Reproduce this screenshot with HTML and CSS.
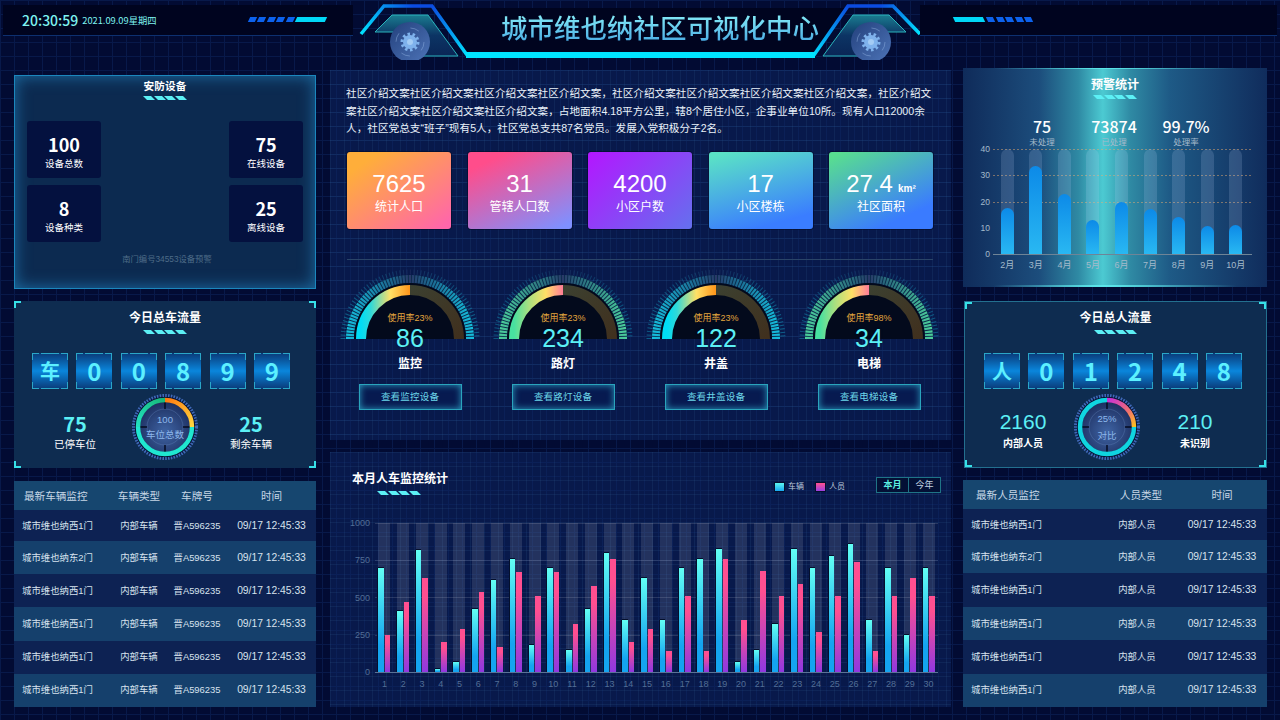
FILE: index.html
```html
<!DOCTYPE html>
<html lang="zh-CN">
<head>
  <meta charset="UTF-8" />
  <title>城市维也纳社区可视化中心</title>
  <link rel="stylesheet" href="styles.css">
</head>
<body>
  <svg class="svg-defs" xmlns="http://www.w3.org/2000/svg">
    <defs>
      <linearGradient id="line-left" gradientUnits="userSpaceOnUse" x1="8" y1="34" x2="60" y2="6">
        <stop offset="0" stop-color="#00e5ff"/><stop offset="1" stop-color="#0b4be0"/>
      </linearGradient>
      <linearGradient id="line-down" gradientUnits="userSpaceOnUse" x1="79" y1="6" x2="114" y2="57">
        <stop offset="0" stop-color="#0b4be0"/><stop offset="1" stop-color="#00e5ff"/>
      </linearGradient>
      <linearGradient id="line-up" gradientUnits="userSpaceOnUse" x1="458" y1="57" x2="495" y2="6">
        <stop offset="0" stop-color="#00e5ff"/><stop offset="1" stop-color="#0b4be0"/>
      </linearGradient>
      <linearGradient id="line-right" gradientUnits="userSpaceOnUse" x1="527" y1="6" x2="567" y2="34">
        <stop offset="0" stop-color="#0b4be0"/><stop offset="1" stop-color="#00e5ff"/>
      </linearGradient>
      <linearGradient id="trap" x1="0" y1="0" x2="0" y2="1">
        <stop offset="0" stop-color="#1a7c90"/><stop offset=".5" stop-color="#0c3464"/><stop offset="1" stop-color="#0a2656"/>
      </linearGradient>
      <linearGradient id="gear-disc" x1="0" y1="0" x2="1" y2="1">
        <stop offset="0" stop-color="#23407c"/><stop offset="1" stop-color="#4d74b8"/>
      </linearGradient>
      <linearGradient id="arc-cyan" gradientUnits="userSpaceOnUse" x1="21" y1="0" x2="70" y2="0">
        <stop offset="0" stop-color="#00dcf5"/><stop offset=".2" stop-color="#30d8d8"/><stop offset=".6" stop-color="#ffe066"/><stop offset="1" stop-color="#ff951a"/>
      </linearGradient>
      <linearGradient id="arc-green" gradientUnits="userSpaceOnUse" x1="21" y1="0" x2="70" y2="0">
        <stop offset="0" stop-color="#48e0a0"/><stop offset=".3" stop-color="#a8e080"/><stop offset=".65" stop-color="#ffe066"/><stop offset="1" stop-color="#ff7d98"/>
      </linearGradient>
      <linearGradient id="arc-brown" x1="0" y1="0" x2="1" y2="1">
        <stop offset="0" stop-color="#3c4030"/><stop offset="1" stop-color="#40301e"/>
      </linearGradient>
      <linearGradient id="band-cyan" gradientUnits="userSpaceOnUse" x1="6" y1="0" x2="134" y2="0">
        <stop offset="0" stop-color="#14c0e0"/><stop offset=".38" stop-color="#1d5f88"/><stop offset=".5" stop-color="#2a3868"/><stop offset=".62" stop-color="#1d5f88"/><stop offset="1" stop-color="#14c0e0"/>
      </linearGradient>
      <linearGradient id="band-green" gradientUnits="userSpaceOnUse" x1="6" y1="0" x2="134" y2="0">
        <stop offset="0" stop-color="#4cd09c"/><stop offset=".38" stop-color="#28687c"/><stop offset=".5" stop-color="#2a3868"/><stop offset=".62" stop-color="#28687c"/><stop offset="1" stop-color="#4cd09c"/>
      </linearGradient>
      <radialGradient id="ring-disc" cx=".5" cy=".6" r=".6">
        <stop offset="0" stop-color="#3f64a4"/><stop offset="1" stop-color="#1d2f60"/>
      </radialGradient>
      <linearGradient id="ring-orange" x1="0" y1="0" x2="1" y2="1">
        <stop offset="0" stop-color="#ff7a10"/><stop offset="1" stop-color="#ffd640"/>
      </linearGradient>
      <linearGradient id="ring-green" x1="0" y1="1" x2="1" y2="0">
        <stop offset="0" stop-color="#22e0c0"/><stop offset="1" stop-color="#18b878"/>
      </linearGradient>
      <linearGradient id="ring-magenta" x1="0" y1="0" x2="1" y2="1">
        <stop offset="0" stop-color="#c830d8"/><stop offset=".6" stop-color="#f07070"/><stop offset="1" stop-color="#ffc020"/>
      </linearGradient>

      <symbol id="gauge-cyan" viewBox="0 0 140 70">
        <path d="M3 70A67 67 0 0 1 137 70" fill="none" stroke="url(#band-cyan)" stroke-width="5" stroke-dasharray="1 2.5" opacity=".4"/>
        <path d="M10 70A60 60 0 0 1 130 70" fill="none" stroke="#0b2c4c" stroke-width="8"/>
        <path d="M10 70A60 60 0 0 1 130 70" fill="none" stroke="url(#band-cyan)" stroke-width="8" stroke-dasharray="2.1 1"/>
        <circle cx="70" cy="70" r="56" fill="#030a1c"/>
        <path d="M21 70A49 49 0 0 1 70 21" fill="none" stroke="url(#arc-cyan)" stroke-width="10"/>
        <path d="M70 21A49 49 0 0 1 119 70" fill="none" stroke="url(#arc-brown)" stroke-width="10"/>
      </symbol>
      <symbol id="gauge-green" viewBox="0 0 140 70">
        <path d="M3 70A67 67 0 0 1 137 70" fill="none" stroke="url(#band-cyan)" stroke-width="5" stroke-dasharray="1 2.5" opacity=".35"/>
        <path d="M10 70A60 60 0 0 1 130 70" fill="none" stroke="#0b2c4c" stroke-width="8"/>
        <path d="M10 70A60 60 0 0 1 130 70" fill="none" stroke="url(#band-green)" stroke-width="8" stroke-dasharray="2.1 1"/>
        <circle cx="70" cy="70" r="56" fill="#030a1c"/>
        <path d="M21 70A49 49 0 0 1 70 21" fill="none" stroke="url(#arc-green)" stroke-width="10"/>
        <path d="M70 21A49 49 0 0 1 119 70" fill="none" stroke="url(#arc-brown)" stroke-width="10"/>
      </symbol>
      <symbol id="dial" viewBox="0 0 66 66">
        <circle cx="33" cy="33" r="31.5" fill="#0a1a44" stroke="#3f68b8" stroke-width="3" stroke-dasharray="1.6 1.2"/>
        <circle cx="33" cy="33" r="30" fill="#07122e"/>
        <circle cx="33" cy="33" r="25" fill="url(#ring-disc)"/>
        <circle cx="33" cy="33" r="18" fill="none" stroke="#6f92c8" stroke-width=".6" opacity=".5"/>
        <path d="M33 8v7M33 51v7M8 33h7M51 33h7" stroke="#050b20" stroke-width="1.5"/>
      </symbol>
      <symbol id="gear" viewBox="0 0 40 40">
        <circle cx="20" cy="20" r="20" fill="url(#gear-disc)"/>
        <circle cx="20" cy="20" r="14" fill="none" stroke="#9fc0ee" stroke-width=".8" stroke-dasharray="9 13" opacity=".5"/>
        <circle cx="20" cy="20" r="8" fill="none" stroke="#7fb2ec" stroke-width="3" stroke-dasharray="2.5 2.5"/>
        <circle cx="20" cy="20" r="7" fill="#7fb2ec"/>
        <circle cx="20" cy="20" r="3" fill="#a4ccf4"/>
      </symbol>
    </defs>
  </svg>

  <header class="header">
    <div class="bar bar-left">
      <span class="clock">20:30:59</span>
      <span class="date">2021.09.09星期四</span>
      <div class="ticks"><i></i><i></i><i></i><i></i><i></i><b></b></div>
    </div>
    <div class="title-block">
      <svg class="title-art" viewBox="0 0 575 60" xmlns="http://www.w3.org/2000/svg">
        <polygon points="79,8 114,54 458,54 495,8" fill="#00041f"/>
        <polygon points="22,32 39,15 75,15 105,56 60,56 40,32" fill="url(#trap)" stroke="#2ab4bc" stroke-width="1"/>
        <polygon points="553,32 536,15 500,15 470,56 515,56 535,32" fill="url(#trap)" stroke="#2ab4bc" stroke-width="1"/>
        <path d="M8 34L31 6H60" fill="none" stroke="url(#line-left)" stroke-width="3.5"/>
        <path d="M60 6H79L114 55" fill="none" stroke="url(#line-down)" stroke-width="3.5"/>
        <path d="M461 55L495 6H527" fill="none" stroke="url(#line-up)" stroke-width="3.5"/>
        <path d="M527 6H540L567 34" fill="none" stroke="url(#line-right)" stroke-width="3.5"/>
        <rect x="113" y="52" width="349" height="6" fill="#00e5ff"/>
        <use href="#gear" x="37" y="22" width="40" height="40"/>
        <use href="#gear" x="498" y="22" width="40" height="40"/>
      </svg>
      <h1 class="title">城市维也纳社区可视化中心</h1>
    </div>
    <div class="bar bar-right">
      <div class="ticks ticks-flip"><b></b><i></i><i></i><i></i><i></i><i></i></div>
    </div>
  </header>

  <main class="page">
    <section class="col col-left">
      <div class="panel panel-device">
        <h2 class="panel-title">安防设备</h2>
        <div class="stripes"><i></i><i></i><i></i><i></i></div>
        <div class="device-grid">
          <div class="device"><strong>100</strong><span>设备总数</span></div>
          <div class="device"><strong>75</strong><span>在线设备</span></div>
          <div class="device"><strong>8</strong><span>设备种类</span></div>
          <div class="device"><strong>25</strong><span>离线设备</span></div>
        </div>
        <p class="device-note">南门编号34553设备预警</p>
      </div>

      <div class="panel panel-flow">
        <h2 class="panel-title title-flow">今日总车流量</h2>
        <div class="stripes"><i></i><i></i><i></i><i></i></div>
        <div class="digits">
          <span class="digit">车</span><span class="digit">0</span><span class="digit">0</span><span class="digit">8</span><span class="digit">9</span><span class="digit">9</span>
        </div>
        <div class="flow-row">
          <div class="flow-stat"><strong>75</strong><span>已停车位</span></div>
          <div class="ring">
            <svg viewBox="0 0 66 66" xmlns="http://www.w3.org/2000/svg">
              <use href="#dial" width="66" height="66"/>
              <path d="M60 33A27 27 0 0 1 6 33" fill="none" stroke="#20e6d0" stroke-width="4.5"/>
              <path d="M6 33A27 27 0 0 1 33 6" fill="none" stroke="url(#ring-green)" stroke-width="4.5"/>
              <path d="M33 6A27 27 0 0 1 60 33" fill="none" stroke="url(#ring-orange)" stroke-width="4.5"/>
            </svg>
            <div class="ring-text"><span>100</span><span>车位总数</span></div>
          </div>
          <div class="flow-stat"><strong>25</strong><span>剩余车辆</span></div>
        </div>
      </div>

      <div class="table table-car">
        <div class="row row-head"><span>最新车辆监控</span><span>车辆类型</span><span>车牌号</span><span>时间</span></div>
        <div class="row"><span>城市维也纳西1门</span><span>内部车辆</span><span>晋A596235</span><span>09/17 12:45:33</span></div>
        <div class="row"><span>城市维也纳东2门</span><span>内部车辆</span><span>晋A596235</span><span>09/17 12:45:33</span></div>
        <div class="row"><span>城市维也纳西1门</span><span>内部车辆</span><span>晋A596235</span><span>09/17 12:45:33</span></div>
        <div class="row"><span>城市维也纳西1门</span><span>内部车辆</span><span>晋A596235</span><span>09/17 12:45:33</span></div>
        <div class="row"><span>城市维也纳西1门</span><span>内部车辆</span><span>晋A596235</span><span>09/17 12:45:33</span></div>
        <div class="row"><span>城市维也纳西1门</span><span>内部车辆</span><span>晋A596235</span><span>09/17 12:45:33</span></div>
      </div>
    </section>

    <section class="col col-center">
      <div class="panel-intro">
        <p class="intro">社区介绍文案社区介绍文案社区介绍文案社区介绍文案，社区介绍文案社区介绍文案社区介绍文案社区介绍文案，社区介绍文<br>案社区介绍文案社区介绍文案社区介绍文案，占地面积4.18平方公里，辖8个居住小区，企事业单位10所。现有人口12000余<br>人，社区党总支“班子”现有5人，社区党总支共87名党员。发展入党积极分子2名。</p>
        <div class="cards">
          <div class="card card-orange"><strong>7625</strong><span>统计人口</span></div>
          <div class="card card-pink"><strong>31</strong><span>管辖人口数</span></div>
          <div class="card card-purple"><strong>4200</strong><span>小区户数</span></div>
          <div class="card card-teal"><strong>17</strong><span>小区楼栋</span></div>
          <div class="card card-green"><strong>27.4<small>km²</small></strong><span>社区面积</span></div>
        </div>
        <div class="divider"></div>
        <div class="gauges">
          <div class="gauge">
            <div class="gauge-dial">
              <svg class="gauge-art" viewBox="0 0 140 70" xmlns="http://www.w3.org/2000/svg"><use href="#gauge-cyan" width="140" height="70"/></svg>
              <span class="gauge-rate">使用率23%</span>
              <strong class="gauge-num">86</strong>
            </div>
            <span class="gauge-name">监控</span>
            <a class="gauge-btn">查看监控设备</a>
          </div>
          <div class="gauge">
            <div class="gauge-dial">
              <svg class="gauge-art" viewBox="0 0 140 70" xmlns="http://www.w3.org/2000/svg"><use href="#gauge-green" width="140" height="70"/></svg>
              <span class="gauge-rate">使用率23%</span>
              <strong class="gauge-num">234</strong>
            </div>
            <span class="gauge-name">路灯</span>
            <a class="gauge-btn">查看路灯设备</a>
          </div>
          <div class="gauge">
            <div class="gauge-dial">
              <svg class="gauge-art" viewBox="0 0 140 70" xmlns="http://www.w3.org/2000/svg"><use href="#gauge-cyan" width="140" height="70"/></svg>
              <span class="gauge-rate">使用率23%</span>
              <strong class="gauge-num">122</strong>
            </div>
            <span class="gauge-name">井盖</span>
            <a class="gauge-btn">查看井盖设备</a>
          </div>
          <div class="gauge">
            <div class="gauge-dial">
              <svg class="gauge-art" viewBox="0 0 140 70" xmlns="http://www.w3.org/2000/svg"><use href="#gauge-green" width="140" height="70"/></svg>
              <span class="gauge-rate">使用率98%</span>
              <strong class="gauge-num">34</strong>
            </div>
            <span class="gauge-name">电梯</span>
            <a class="gauge-btn">查看电梯设备</a>
          </div>
        </div>
      </div>

      <div class="panel-chart">
        <div class="chart-head">
          <div>
            <h2 class="chart-title">本月人车监控统计</h2>
            <div class="stripes stripes-left"><i></i><i></i><i></i><i></i></div>
          </div>
          <div class="legend">
            <span class="swatch swatch-car"></span><span>车辆</span>
            <span class="swatch swatch-person"></span><span>人员</span>
          </div>
          <div class="toggle"><span class="on">本月</span><span>今年</span></div>
        </div>
        <div class="month-chart">
          <div class="month-y"><span>1000</span><span>750</span><span>500</span><span>250</span><span>0</span></div>
          <div class="month-plot" id="monthPlot"></div>
        </div>
        <div class="month-x" id="monthX"></div>
      </div>
    </section>

    <section class="col col-right">
      <div class="panel-alert">
        <h2 class="panel-title">预警统计</h2>
        <div class="stripes"><i></i><i></i><i></i><i></i></div>
        <div class="alert-stats">
          <div><strong>75</strong><span>未处理</span></div>
          <div><strong>73874</strong><span>已处理</span></div>
          <div><strong>99.7%</strong><span>处理率</span></div>
        </div>
        <div class="alert-chart">
          <div class="alert-y"><span>40</span><span>30</span><span>20</span><span>10</span><span>0</span></div>
          <div class="alert-plot" id="alertPlot"></div>
        </div>
        <div class="alert-x" id="alertX"></div>
      </div>

      <div class="panel panel-flow panel-flow-right">
        <h2 class="panel-title title-flow">今日总人流量</h2>
        <div class="stripes"><i></i><i></i><i></i><i></i></div>
        <div class="digits">
          <span class="digit">人</span><span class="digit">0</span><span class="digit">1</span><span class="digit">2</span><span class="digit">4</span><span class="digit">8</span>
        </div>
        <div class="flow-row">
          <div class="flow-stat"><strong>2160</strong><span>内部人员</span></div>
          <div class="ring">
            <svg viewBox="0 0 66 66" xmlns="http://www.w3.org/2000/svg">
              <use href="#dial" width="66" height="66"/>
              <path d="M60 33A27 27 0 1 1 33 6" fill="none" stroke="#10d4e0" stroke-width="4.5"/>
              <path d="M33 6A27 27 0 0 1 60 33" fill="none" stroke="url(#ring-magenta)" stroke-width="4.5"/>
            </svg>
            <div class="ring-text ring-text-wide"><span>25%</span><span>对比</span></div>
          </div>
          <div class="flow-stat"><strong>210</strong><span>未识别</span></div>
        </div>
      </div>

      <div class="table table-person">
        <div class="row row-head"><span>最新人员监控</span><span>人员类型</span><span>时间</span></div>
        <div class="row"><span>城市维也纳西1门</span><span>内部人员</span><span>09/17 12:45:33</span></div>
        <div class="row"><span>城市维也纳东2门</span><span>内部人员</span><span>09/17 12:45:33</span></div>
        <div class="row"><span>城市维也纳西1门</span><span>内部人员</span><span>09/17 12:45:33</span></div>
        <div class="row"><span>城市维也纳西1门</span><span>内部人员</span><span>09/17 12:45:33</span></div>
        <div class="row"><span>城市维也纳西1门</span><span>内部人员</span><span>09/17 12:45:33</span></div>
        <div class="row"><span>城市维也纳西1门</span><span>内部人员</span><span>09/17 12:45:33</span></div>
      </div>
    </section>
  </main>

  <script src="app.js"></script>
</body>
</html>
```

FILE: styles.css
```css
* {
  box-sizing: border-box;
}
body {
  margin: 0;
  width: 1280px;
  height: 720px;
  overflow: hidden;
  font-family: "Liberation Sans", "Noto Sans CJK SC", sans-serif;
  color: #fff;
  background-color: #020b33;
  background-image:
    linear-gradient(#08194a 1px, transparent 1px),
    linear-gradient(90deg, #08194a 1px, transparent 1px);
  background-size: 14px 14px;
}
h1, h2, p {
  margin: 0;
}
.svg-defs {
  display: block;
  width: 0;
  height: 0;
}

/* header */
.header {
  display: flex;
  height: 60px;
}
.bar {
  display: flex;
  align-items: center;
  height: 31px;
  margin-top: 5px;
  background: #00041f;
  border-bottom: 1px solid #0d3070;
}
.bar-left {
  width: 350px;
  margin-left: 3px;
  padding: 0 27px 1px 19px;
}
.bar-right {
  width: 357px;
  margin-left: 0;
  padding: 0 0 1px 34px;
}
.clock {
  font-family: "Noto Sans CJK SC", sans-serif;
  font-size: 14px;
  font-weight: 500;
  line-height: 18px;
  color: #7ff3f0;
}
.date {
  margin-left: 4px;
  font-family: "Noto Sans CJK SC", sans-serif;
  font-size: 9.3px;
  line-height: 18px;
  color: #7ff3f0;
}
.ticks {
  display: flex;
  gap: 3px;
  margin-left: auto;
}
.ticks-flip {
  margin-left: 0;
}
.ticks i {
  width: 6.5px;
  height: 5px;
  background: #0c62ee;
  transform: skewX(-25deg);
}
.ticks b {
  width: 30px;
  height: 5px;
  background: #00d8f8;
  transform: skewX(-25deg);
}
.ticks-flip i {
  transform: skewX(25deg);
}
.ticks-flip b {
  transform: skewX(25deg);
}
.title-block {
  display: grid;
  width: 567px;
  height: 60px;
}
.title-block > * {
  grid-area: 1 / 1;
}
.title-art {
  width: 575px;
  height: 60px;
}
.title {
  align-self: start;
  margin: 11px 0 0 148px;
  font-family: "Noto Sans CJK SC", sans-serif;
  font-size: 26.5px;
  font-weight: 500;
  line-height: 32px;
  white-space: nowrap;
  color: transparent;
  background: linear-gradient(#8cf4fa, #48aae4);
  -webkit-background-clip: text;
  background-clip: text;
}

/* page columns */
.page {
  display: grid;
  grid-template-columns: 302px 621px 304px;
  column-gap: 14px;
  padding-left: 14px;
}
.col {
  display: flex;
  flex-direction: column;
}
.col-left {
  margin-top: 15px;
}
.col-center {
  margin-top: 10px;
  margin-left: 0;
}
.col-right {
  margin-top: 8px;
  margin-left: -2px;
  width: 304px;
}
.panel {
  background: #0c2a50;
}
.panel-title {
  font-size: 10.7px;
  font-weight: 700;
  line-height: 14px;
  text-align: center;
  font-family: "Noto Sans CJK SC", sans-serif;
}
.stripes {
  display: flex;
  justify-content: center;
  gap: 2.6px;
  margin-top: 3px;
}
.stripes i {
  width: 8px;
  height: 4px;
  background: #5cf0f5;
  transform: skewX(45deg);
}
.stripes-left {
  justify-content: flex-start;
  margin: 5px 0 0 27px;
}

/* device panel */
.panel-device {
  height: 214px;
  padding-top: 3px;
  border: 1px solid #1b87bd;
  box-shadow: inset 0 0 16px #1d6fa6;
}
.panel-device .stripes {
  margin-top: 3px;
}
.device-grid {
  display: grid;
  grid-template-columns: 74px 74px;
  grid-auto-rows: 57px;
  justify-content: space-between;
  row-gap: 7px;
  margin-top: 21px;
  padding: 0 12px;
}
.device {
  display: flex;
  flex-direction: column;
  align-items: center;
  padding-top: 12px;
  background: #04113f;
  border-radius: 3px;
  font-family: "Noto Sans CJK SC", sans-serif;
}
.device strong {
  font-size: 18px;
  line-height: 22px;
}
.device span {
  font-size: 9.5px;
  line-height: 14px;
  margin-top: 1px;
}
.device-note {
  margin: 11px 0 0 4px;
  font-size: 8.3px;
  line-height: 12px;
  text-align: center;
  color: #4e6c88;
}

/* flow panels */
.panel-flow {
  height: 167px;
  margin-top: 12px;
  padding-top: 8px;
  background:
    linear-gradient(#37e0e8, #37e0e8) 0 0 / 7px 2px no-repeat,
    linear-gradient(#37e0e8, #37e0e8) 0 0 / 2px 7px no-repeat,
    linear-gradient(#37e0e8, #37e0e8) 100% 0 / 7px 2px no-repeat,
    linear-gradient(#37e0e8, #37e0e8) 100% 0 / 2px 7px no-repeat,
    linear-gradient(#37e0e8, #37e0e8) 0 100% / 7px 2px no-repeat,
    linear-gradient(#37e0e8, #37e0e8) 0 100% / 2px 7px no-repeat,
    linear-gradient(#37e0e8, #37e0e8) 100% 100% / 7px 2px no-repeat,
    linear-gradient(#37e0e8, #37e0e8) 100% 100% / 2px 7px no-repeat,
    #0e2c50;
}
.panel-flow-right {
  margin-top: 14px;
  margin-left: 1px;
  border: 1px solid #23708f;
  padding-top: 7px;
}
.title-flow {
  font-size: 12px;
  line-height: 16px;
}
.panel-flow .stripes {
  margin-top: 5px;
}
.digits {
  display: flex;
  gap: 8.4px;
  margin-top: 19px;
  padding-left: 18px;
}
.panel-flow-right .digits {
  padding-left: 19px;
}
.digit {
  width: 36px;
  height: 36px;
  font-family: "Noto Sans CJK SC", sans-serif;
  font-size: 24px;
  font-weight: 700;
  line-height: 35px;
  text-align: center;
  color: #5cf0ff;
  --edge: #2aa6c8;
  background:
    linear-gradient(90deg, var(--edge) 7px, transparent 7px 9px, var(--edge) 9px 27px, transparent 27px 29px, var(--edge) 29px) 0 0 / 100% 1px no-repeat,
    linear-gradient(90deg, var(--edge) 7px, transparent 7px 9px, var(--edge) 9px 27px, transparent 27px 29px, var(--edge) 29px) 0 100% / 100% 1px no-repeat,
    linear-gradient(var(--edge) 7px, transparent 7px 29px, var(--edge) 29px) 0 0 / 1px 100% no-repeat,
    linear-gradient(var(--edge) 7px, transparent 7px 29px, var(--edge) 29px) 100% 0 / 1px 100% no-repeat,
    linear-gradient(#0a3a78, #0a86dc 50%, #0a3a78);
}
.digit:first-child {
  font-size: 20px;
}
.flow-row {
  display: flex;
  align-items: center;
  margin-top: 5px;
  padding-left: 21px;
}
.panel-flow-right .flow-row {
  padding-left: 18px;
}
.flow-stat {
  display: flex;
  flex-direction: column;
  align-items: center;
  width: 80px;
  margin-top: 8px;
  font-family: "Noto Sans CJK SC", sans-serif;
}
.flow-stat strong {
  font-size: 20px;
  font-weight: 700;
  line-height: 24px;
  color: #5cf0f5;
}
.flow-stat span {
  margin-top: 1px;
  font-size: 10.5px;
  line-height: 14px;
}
.panel-flow-right .flow-stat {
  margin-top: 5px;
}
.panel-flow-right .flow-stat strong {
  font-family: "Liberation Sans", sans-serif;
  font-size: 21px;
  font-weight: 400;
  line-height: 26px;
}
.panel-flow-right .flow-stat span {
  font-size: 10px;
  font-weight: 700;
}
.ring {
  display: grid;
  width: 66px;
  height: 66px;
  margin: 0 13px 0 17px;
}
.panel-flow-right .ring {
  margin: 0 15px 0 11px;
}
.ring > * {
  grid-area: 1 / 1;
}
.ring svg {
  width: 66px;
  height: 66px;
}
.ring-text {
  display: flex;
  flex-direction: column;
  align-items: center;
  justify-content: center;
  gap: 2px;
  font-size: 9.5px;
  line-height: 13px;
  color: #8db8ec;
}
.ring-text-wide {
  gap: 4px;
}

/* tables */
.table {
  display: flex;
  flex-direction: column;
  height: 226px;
  margin-top: 13px;
}
.table-person {
  height: 227px;
  margin-top: 12px;
}
.row {
  display: grid;
  align-items: center;
  flex: 1;
  font-size: 9.4px;
  line-height: 14px;
  color: #d8e2ee;
  background: #15406c;
  text-align: center;
}
.table-car .row {
  grid-template-columns: 97px 56px 60px 89px;
}
.table-person .row {
  grid-template-columns: 128px 92px 78px;
}
.row span {
  display: block;
  height: 14px;
}
.row span:first-child {
  padding-left: 8px;
  text-align: left;
}
.row span:last-child {
  font-size: 10.3px;
}
.row:nth-child(even) {
  flex: 0 0 31px;
  background: #0d2253;
}
.row:nth-child(4), .row:nth-child(6) {
  flex: 1;
  background: #0d2253;
}
.row.row-head {
  flex: 0 0 29px;
  font-size: 10.6px;
  color: #c6d6e6;
  background: #16466f;
}
.row-head span:last-child {
  font-size: 10.6px;
}
.row-head span:first-child {
  padding-left: 10px;
}
.table-person .row-head span:nth-child(2) {
  padding-left: 8px;
}
.table-person .row-head span:first-child {
  padding-left: 13px;
}

/* intro panel */
.panel-intro, .panel-chart {
  background-color: rgba(14, 40, 100, .5);
  background-image:
    linear-gradient(rgba(50, 100, 150, .16) 1px, transparent 1px),
    linear-gradient(90deg, rgba(50, 100, 150, .16) 1px, transparent 1px);
  background-size: 14px 14px;
}
.panel-intro {
  height: 370px;
  padding-top: 15px;
}
.intro {
  margin-left: 16px;
  font-size: 10.65px;
  line-height: 17.7px;
  white-space: nowrap;
  color: #eaf2fa;
}
.cards {
  display: flex;
  gap: 16.5px;
  margin: 14px 0 0 17px;
}
.card {
  display: flex;
  flex-direction: column;
  align-items: center;
  width: 104px;
  height: 77px;
  padding-top: 18px;
  border-radius: 3px;
  box-shadow: 0 0 0 1px rgba(4, 12, 40, .6);
}
.card strong {
  height: 28px;
  font-size: 24px;
  font-weight: 400;
  line-height: 28px;
}
.card small {
  margin-left: 5px;
  font-size: 10px;
  font-weight: 700;
  line-height: 0;
}
.card span {
  margin-top: 1px;
  font-size: 12px;
  line-height: 16px;
}
.card-orange {
  background: linear-gradient(145deg, #ffae3a 15%, #ff66aa 95%);
}
.card-pink {
  background: linear-gradient(155deg, #ff4d8b 15%, #7f90ff 95%);
}
.card-purple {
  background: linear-gradient(135deg, #b416ff, #6470ee);
}
.card-teal {
  background: linear-gradient(165deg, #5ae2c6 5%, #3a7dff 85%);
}
.card-green {
  background: linear-gradient(155deg, #58de90 5%, #3a7bff 80%);
}
.divider {
  height: 1px;
  margin: 30px 18px 0 17px;
  background: #2a4468;
}
.gauges {
  display: grid;
  grid-template-columns: repeat(4, 153px);
  margin-top: 9px;
  padding-left: 3.5px;
}
.gauge {
  display: flex;
  flex-direction: column;
  align-items: center;
}
.gauge-dial {
  display: grid;
  justify-items: center;
  width: 140px;
  height: 82px;
}
.gauge-dial > * {
  grid-area: 1 / 1;
  align-self: start;
}
.gauge-art {
  width: 140px;
  height: 70px;
}
.gauge-rate {
  margin-top: 43px;
  font-size: 9px;
  line-height: 12px;
  color: #e2a63e;
}
.gauge-num {
  margin-top: 56px;
  font-size: 25px;
  font-weight: 400;
  line-height: 26px;
  color: #5cf0f5;
  text-shadow: 0 0 2px #04102c;
}
.gauge-name {
  margin-top: 4px;
  font-size: 12px;
  font-weight: 700;
  line-height: 16px;
  font-family: "Noto Sans CJK SC", sans-serif;
}
.gauge-btn {
  width: 103px;
  height: 26px;
  margin-top: 13px;
  font-size: 9.5px;
  line-height: 24px;
  letter-spacing: .2px;
  text-align: center;
  color: #6cd6e8;
  background: #071a50;
  border: 1px solid #2aa4bc;
  box-shadow: inset 0 0 7px #2a9cc0;
}

/* month chart */
.panel-chart {
  height: 255px;
  margin-top: 12px;
  padding-top: 18px;
}
.chart-head {
  display: flex;
  align-items: flex-start;
  padding: 0 10px 0 22px;
}
.chart-title {
  font-family: "Noto Sans CJK SC", sans-serif;
  font-size: 12px;
  font-weight: 700;
  line-height: 16px;
}
.legend {
  display: flex;
  align-items: center;
  margin: 12px 31px 0 auto;
  font-size: 8px;
  line-height: 10px;
  color: #bccbdc;
}
.swatch {
  width: 9px;
  height: 8px;
  margin-right: 4px;
  outline: 1px solid #04102c;
}
.swatch-car {
  background: linear-gradient(#5cf5f0, #18a8f0);
}
.swatch-person {
  margin-left: 12px;
  background: linear-gradient(#ff4f90, #9840e0);
}
.toggle {
  display: flex;
  width: 65px;
  height: 16px;
  margin-top: 7px;
  border: 1px solid #1f7486;
  background: #031035;
  font-size: 9px;
  line-height: 14px;
  text-align: center;
  color: #c2d2e2;
}
.toggle span {
  flex: 1;
}
.toggle .on {
  font-weight: 700;
  color: #5cf0e0;
  border-right: 1px solid #1f7486;
}
.month-chart {
  display: flex;
  margin-top: 28px;
}
.month-y {
  display: flex;
  flex-direction: column;
  justify-content: space-between;
  width: 45px;
  height: 149px;
  padding-right: 5px;
  font-size: 9px;
  line-height: 0;
  text-align: right;
  color: #526e96;
}
.month-y span {
  height: 0;
}
.month-plot {
  display: flex;
  width: 563px;
  height: 149px;
  box-shadow: 0 1px 0 #5a7296;
  background:
    linear-gradient(rgba(255, 255, 255, .13), rgba(255, 255, 255, .13)) 0 0 / 100% 1px no-repeat,
    linear-gradient(rgba(255, 255, 255, .13), rgba(255, 255, 255, .13)) 0 37px / 100% 1px no-repeat,
    linear-gradient(rgba(255, 255, 255, .13), rgba(255, 255, 255, .13)) 0 74px / 100% 1px no-repeat,
    linear-gradient(rgba(255, 255, 255, .13), rgba(255, 255, 255, .13)) 0 112px / 100% 1px no-repeat;
}
.month-group {
  display: flex;
  flex: 1;
  justify-content: center;
}
.month-track {
  display: flex;
  align-items: flex-end;
  justify-content: center;
  gap: 1px;
  width: 12px;
  background: rgba(255, 255, 255, .11);
}
.bar-car, .bar-person {
  flex: none;
  width: 5.5px;
}
.bar-car {
  background: linear-gradient(#62fff4, #14a4f0 75%);
  box-shadow: 0 -1px 0 #04102c, -1px 0 0 #04102c;
}
.bar-person {
  background: linear-gradient(#ff4f90 20%, #9038e0);
}
.month-x {
  display: flex;
  margin: 6px 0 0 45px;
  width: 563px;
  font-size: 9px;
  line-height: 12px;
  color: #526e96;
}
.month-x span {
  flex: 1;
  text-align: center;
}

/* alert panel */
.panel-alert {
  width: 304px;
  height: 219px;
  padding-top: 8px;
  background:
    linear-gradient(90deg, transparent 10%, #5ce6ea 46%, transparent 90%) 0 0 / 100% 1px no-repeat,
    linear-gradient(90deg, transparent 10%, #5ce6ea 46%, transparent 90%) 0 100% / 100% 2px no-repeat,
    linear-gradient(90deg, #0f2b5a, #1c4d7c 25%, #2f8aa4 38%, #4ccad2 46%, #2f8aa4 55%, #1e5a86 68%, #102c5c);
}
.panel-alert .panel-title {
  font-size: 12px;
  line-height: 16px;
}
.alert-stats {
  display: flex;
  justify-content: center;
  margin-top: 17px;
  padding-right: 2px;
  text-align: center;
}
.alert-stats div {
  display: flex;
  flex-direction: column;
  width: 72px;
}
.alert-stats strong {
  font-family: "Noto Sans CJK SC", sans-serif;
  font-size: 16px;
  font-weight: 500;
  line-height: 20px;
}
.alert-stats span {
  font-size: 8.5px;
  line-height: 12px;
  color: #a4bacb;
}
.alert-chart {
  display: flex;
  margin-top: 1px;
}
.alert-y {
  display: flex;
  flex-direction: column;
  justify-content: space-between;
  width: 30px;
  height: 105px;
  padding-right: 3px;
  font-size: 8.5px;
  line-height: 0;
  text-align: right;
  color: #a4bacb;
}
.alert-y span {
  height: 0;
}
.alert-plot {
  display: flex;
  width: 259px;
  height: 105px;
  padding-right: 2px;
  box-shadow: 0 1px 0 #6f8496;
  --dot: repeating-linear-gradient(90deg, rgba(230, 170, 110, .5) 0 2px, transparent 2px 4px);
  background:
    var(--dot) 0 0 / 100% 1px no-repeat,
    var(--dot) 0 26px / 100% 1px no-repeat,
    var(--dot) 0 53px / 100% 1px no-repeat;
}
.alert-group {
  display: flex;
  flex: 1;
  justify-content: center;
}
.alert-track {
  display: flex;
  align-items: flex-end;
  width: 13px;
  border-radius: 6.5px 6.5px 0 0;
  background: rgba(200, 220, 255, .16);
}
.alert-bar {
  width: 100%;
  border-radius: 6.5px 6.5px 0 0;
  background: linear-gradient(#0c8ae8, #29b8f2);
}
.alert-x {
  display: flex;
  width: 259px;
  margin: 5px 0 0 30px;
  padding-right: 2px;
  font-size: 9px;
  line-height: 12px;
  color: #a4bacb;
}
.alert-x span {
  flex: 1;
  text-align: center;
}
```

FILE: app.js
```js
const carData = [700, 410, 820, 20, 70, 420, 620, 760, 180, 700, 150, 420, 800, 350, 630, 350, 700, 760, 825, 70, 150, 320, 825, 700, 780, 860, 350, 700, 250, 700];
const personData = [250, 470, 630, 200, 290, 540, 170, 670, 510, 670, 320, 580, 760, 200, 290, 140, 510, 140, 760, 350, 680, 510, 590, 270, 510, 740, 140, 510, 630, 510];

const monthPlot = document.getElementById('monthPlot');
const monthX = document.getElementById('monthX');

carData.forEach((car, i) => {
  monthPlot.innerHTML += `<div class="month-group"><div class="month-track">
    <div class="bar-car" style="height:${car / 10}%"></div>
    <div class="bar-person" style="height:${personData[i] / 10}%"></div>
  </div></div>`;
  monthX.innerHTML += `<span>${i + 1}</span>`;
});

const alertData = [17.5, 33.5, 23, 13, 20, 17, 14, 10.5, 11];
const alertPlot = document.getElementById('alertPlot');
const alertX = document.getElementById('alertX');

alertData.forEach((value, i) => {
  alertPlot.innerHTML += `<div class="alert-group"><div class="alert-track">
    <div class="alert-bar" style="height:${value / 40 * 100}%"></div>
  </div></div>`;
  alertX.innerHTML += `<span>${i + 2}月</span>`;
});
```
